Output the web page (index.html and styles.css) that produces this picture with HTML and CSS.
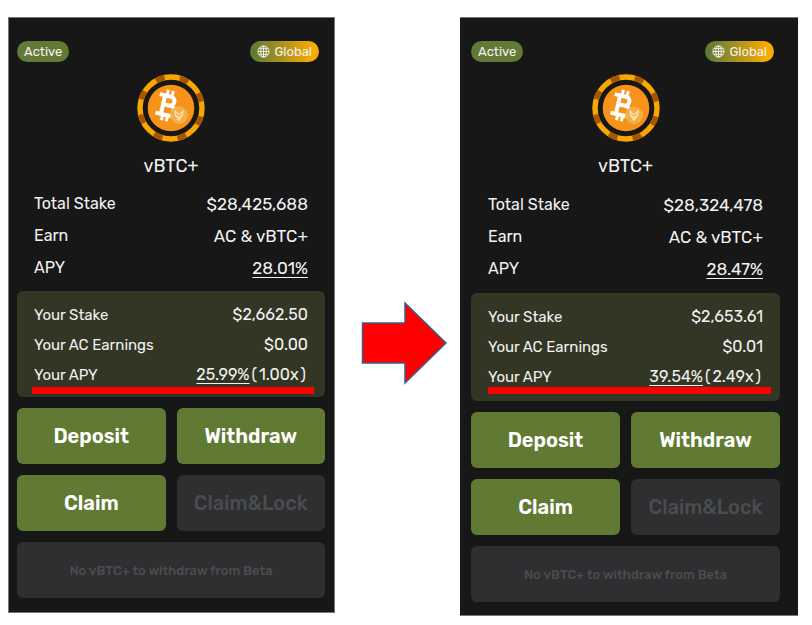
FILE: index.html
```html
<!DOCTYPE html>
<html lang="en">
<head>
    <meta charset="UTF-8">
    <meta name="viewport" content="width=device-width, initial-scale=1.0">
    <title>vBTC+ Staking</title>
    <link rel="stylesheet" href="styles.css">
</head>
<body>
    <!-- shared icons -->
    <svg class="sprite" aria-hidden="true">
        <symbol id="globe" viewBox="0 0 14 14">
            <g fill="none" stroke="currentColor" stroke-width="1">
                <circle cx="7" cy="7" r="6"/>
                <ellipse cx="7" cy="7" rx="3" ry="6"/>
                <path d="M7 1v12M1 7h12M2 4h10M2 10h10"/>
            </g>
        </symbol>
        <symbol id="coin" viewBox="0 0 68 68">
            <circle cx="34" cy="34" r="31" fill="none" stroke="#f9a602" stroke-width="5.4"/>
            <circle cx="34" cy="34" r="31" fill="none" stroke="#a75400" stroke-width="5.4" stroke-dasharray="9 15.347" transform="rotate(16 34 34)"/>
            <circle cx="34" cy="34" r="23.3" fill="#f7931a"/>
            <g transform="rotate(13 30 31)" fill="none" stroke="#fff" stroke-width="4">
                <path d="M20.500 22H32a4.500 4.500 0 0 1 0 9H26M31 31h2.500a5 5 0 0 1 0 10H20.500M26 22V41"/>
                <path d="M28 16v6M33 16v6M28 41v6M33 41v6" stroke-width="3"/>
            </g>
            <circle cx="42" cy="41" r="8.800" fill="#f2b04a"/>
            <path d="M38 36.500l.5 5 3.500 5 3.500-5 .5-5-2.500 3.500h-3zM38.500 41.500l3.500 1.500 3.500-1.500M42 43v3" fill="none" stroke="#fff0cf" stroke-width="1"/>
        </symbol>
    </svg>

    <main class="compare">
        <section class="card before">
            <div class="badges">
                <span class="badge">Active</span>
                <span class="badge global"><svg class="globe"><use href="#globe"/></svg>Global</span>
            </div>
            <svg class="coin"><use href="#coin"/></svg>
            <h2>vBTC+</h2>
            <dl class="stats">
                <div><dt>Total Stake</dt><dd>$28,425,688</dd></div>
                <div><dt>Earn</dt><dd>AC &amp; vBTC+</dd></div>
                <div><dt>APY</dt><dd><a href="#">28.01%</a></dd></div>
            </dl>
            <dl class="stats yours">
                <div><dt>Your Stake</dt><dd>$2,662.50</dd></div>
                <div><dt>Your AC Earnings</dt><dd>$0.00</dd></div>
                <div><dt>Your APY</dt><dd><a href="#">25.99%</a><span class="boost">(<b>1.00x</b>)</span></dd></div>
            </dl>
            <div class="actions">
                <button type="button">Deposit</button>
                <button type="button">Withdraw</button>
                <button type="button">Claim</button>
                <button type="button" disabled>Claim&amp;Lock</button>
                <button type="button" class="wide" disabled>No vBTC+ to withdraw from Beta</button>
            </div>
        </section>

        <svg class="arrow" viewBox="0 0 87 84" aria-hidden="true">
            <path d="M1.500 22H44V2L85 42 44 82V62H1.500z" fill="#ff0000" stroke="#385d8a" stroke-width="1.500"/>
        </svg>

        <section class="card after">
            <div class="badges">
                <span class="badge">Active</span>
                <span class="badge global"><svg class="globe"><use href="#globe"/></svg>Global</span>
            </div>
            <svg class="coin"><use href="#coin"/></svg>
            <h2>vBTC+</h2>
            <dl class="stats">
                <div><dt>Total Stake</dt><dd>$28,324,478</dd></div>
                <div><dt>Earn</dt><dd>AC &amp; vBTC+</dd></div>
                <div><dt>APY</dt><dd><a href="#">28.47%</a></dd></div>
            </dl>
            <dl class="stats yours">
                <div><dt>Your Stake</dt><dd>$2,653.61</dd></div>
                <div><dt>Your AC Earnings</dt><dd>$0.01</dd></div>
                <div><dt>Your APY</dt><dd><a href="#">39.54%</a><span class="boost">(<b>2.49x</b>)</span></dd></div>
            </dl>
            <div class="actions">
                <button type="button">Deposit</button>
                <button type="button">Withdraw</button>
                <button type="button">Claim</button>
                <button type="button" disabled>Claim&amp;Lock</button>
                <button type="button" class="wide" disabled>No vBTC+ to withdraw from Beta</button>
            </div>
        </section>
    </main>
</body>
</html>
```
FILE: styles.css
```css
* {
    box-sizing: border-box;
}
body {
    margin: 0;
    background-color: #fff;
    color: #f2f2f2;
    font-family: Rubik, Inter, sans-serif;
    font-size: 16px;
}
.sprite {
    position: absolute;
    width: 0;
    height: 0;
}
.compare {
    display: grid;
    grid-template-columns: 327fr 125px 338fr;
    align-items: start;
    padding: 17px 14px 0 8px;
}
.card {
    background-color: #171717;
    border: 1px solid #777;
    padding: 23px 9px 14px 8px;
}
.after {
    border-width: 1px 0;
    padding: 23px 18px 13px 11px;
}
.badges {
    display: flex;
    justify-content: space-between;
    padding-right: 6px;
}
.badge {
    display: flex;
    align-items: center;
    gap: 4px;
    height: 21px;
    padding: 0 7px;
    border-radius: 11px;
    background-color: #617a35;
    font-size: 13px;
    font-weight: 400;
}
.global {
    background: linear-gradient(90deg, #617a35 5%, #f9ab02 90%);
}
.globe {
    width: 13px;
    height: 13px;
}
.coin {
    display: block;
    width: 68px;
    height: 68px;
    margin: 12px auto;
}
h2 {
    margin: 0 0 10px;
    font-size: 18px;
    font-weight: 400;
    line-height: 24px;
    text-align: center;
}
.after h2 {
    margin-bottom: 11px;
}
.stats {
    margin: 0;
    padding: 0 17px;
    line-height: 32px;
}
.stats div {
    display: flex;
    justify-content: space-between;
}
.stats dd {
    margin: 0;
    font-size: 17px;
}
.stats a {
    color: inherit;
    text-underline-offset: 3px;
}
.yours {
    position: relative;
    margin-top: 7px;
    padding: 9px 17px 7px;
    border-radius: 6px;
    background-color: #333624;
    font-size: 15px;
    line-height: 30px;
}
.yours dd {
    font-size: 16px;
}
.after .yours {
    margin-top: 8px;
    padding-bottom: 9px;
}
/* red marker under the APY row */
.yours::after {
    content: "";
    position: absolute;
    left: 15px;
    right: 11px;
    bottom: 3px;
    height: 7px;
    background-color: #ff0000;
}
.after .yours::after {
    left: 17px;
    right: 9px;
    bottom: 7px;
}
.boost {
    padding: 0 2px;
}
.boost b {
    margin: 0 2px;
    font-weight: 400;
}
.actions {
    display: grid;
    grid-template-columns: 1fr 1fr;
    gap: 11px;
    margin-top: 11px;
}
button {
    height: 56px;
    padding: 0;
    border: 0;
    border-radius: 6px;
    background-color: #617a33;
    color: #fff;
    font-family: inherit;
    font-size: 20px;
    font-weight: 600;
    cursor: pointer;
}
button:disabled {
    background-color: #2e2f31;
    color: #4b4c4e;
    font-weight: 500;
    cursor: default;
}
.wide {
    grid-column: span 2;
    font-size: 13px;
}
.arrow {
    width: 87px;
    margin: 284px 12px 0 auto;
}
```
